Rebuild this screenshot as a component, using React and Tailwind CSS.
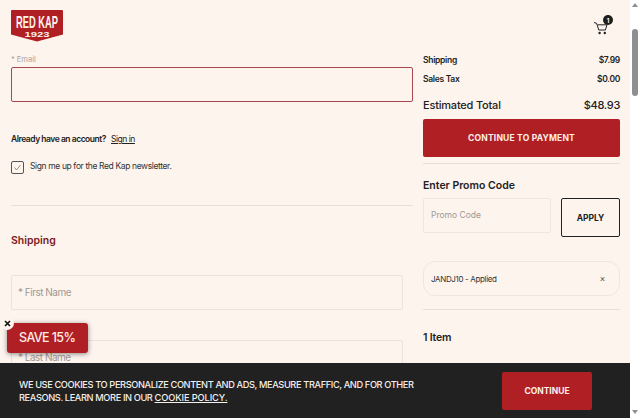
const font = { fontFamily: "Inter, 'Liberation Sans', sans-serif" };

function Logo() {
  return (
    <svg width="52" height="32" viewBox="0 0 52 32" className="block">
      <path d="M0 1a1 1 0 0 1 1-1h50a1 1 0 0 1 1 1v23.5L26 31.5 0 24.5z" fill="#b01f24" />
      <text x="26" y="17.5" textAnchor="middle" textLength="42" lengthAdjust="spacingAndGlyphs" fill="#fdf4ee" fontFamily="Liberation Sans, sans-serif" fontWeight="700" fontSize="17">RED KAP</text>
      <text x="26" y="26.5" textAnchor="middle" textLength="25" lengthAdjust="spacingAndGlyphs" fill="#fdf4ee" fontFamily="Liberation Sans, sans-serif" fontWeight="700" fontSize="7">1923</text>
    </svg>
  );
}

function Cart() {
  return (
    <div className="relative w-[22px] h-[22px]">
      <svg width="16" height="16" viewBox="0 0 16 16" fill="none" className="absolute left-[2px] top-[6px]">
        <path d="M1 2.5l2.6.8 2.2 6.7h6.6l1.6-5.2H4.6" stroke="#222" strokeWidth="1" strokeLinejoin="round" />
        <circle cx="6.6" cy="13" r="1.2" fill="#222" />
        <circle cx="11.8" cy="13" r="1.2" fill="#222" />
      </svg>
      <div className="absolute right-0 top-[1px] w-[10px] h-[10px] rounded-full bg-[#1e1e1e] text-white text-[6px] font-bold flex items-center justify-center">1</div>
    </div>
  );
}

function Row({ label, value }) {
  return (
    <div className="flex justify-between items-center h-[19px] text-[8.5px] tracking-[-0.3px] font-semibold text-[#222]">
      <span>{label}</span>
      <span>{value}</span>
    </div>
  );
}

export default function App() {
  return (
    <div style={font} className="relative h-[418px] w-[640px] overflow-hidden flex bg-white">
      <div className="w-[630px] bg-[#fdf4ee] shrink-0">
        <header className="flex justify-between px-[11px] h-[51px] pt-[10px]">
          <Logo />
          <div className="mr-[6px] mt-[4px]"><Cart /></div>
        </header>

        <div className="flex pl-[11px] pr-[10px] gap-[10px]">
          <main className="w-[402px] shrink-0">
            <div className="text-[7.5px] text-[#a9a29d] leading-[10px] pt-[4px]">* Email</div>
            <div className="mt-[2px] h-[35px] rounded-[2px] border border-[#a8474f] bg-[#fdf4ee]" />
            <p className="mt-[32px] text-[8.5px] tracking-[-0.47px] leading-[11px] font-semibold text-[#222]">
              Already have an account?<span className="ml-[5px] font-normal underline">Sign in</span>
            </p>
            <label className="mt-[16px] flex items-center gap-[6px] text-[8.5px] tracking-[-0.38px] text-[#333]">
              <span className="w-[13px] h-[13px] rounded-[2px] border border-[#555] flex items-center justify-center">
                <svg width="9" height="9" viewBox="0 0 9 9" fill="none"><path d="M1.5 4.5l2 2.5L7.5 2" stroke="#777" strokeWidth="0.8" /></svg>
              </span>
              <span className="-mt-[2px]">Sign me up for the Red Kap newsletter.</span>
            </label>
            <hr className="mt-[31px] border-0 border-t border-[#e8dfd9]" />
            <h2 className="mt-[28px] text-[10.5px] leading-[14px] font-semibold text-[#7d1a20]">Shipping</h2>
            <div className="mt-[27px] w-[392px] h-[35px] border border-[#ece3dc] rounded-[2px] flex items-center px-[6px] text-[10px] tracking-[-0.5px] text-[#a09993]">* First Name</div>
            <div className="mt-[30px] w-[392px] h-[35px] border border-[#ece3dc] rounded-[2px] flex items-center px-[6px] text-[10px] tracking-[-0.5px] text-[#a09993]">* Last Name</div>
          </main>

          <aside className="w-[197px] shrink-0">
            <Row label="Shipping" value="$7.99" />
            <Row label="Sales Tax" value="$0.00" />
            <div className="flex justify-between items-center mt-[6px] h-[20px] text-[#222] font-medium">
              <span className="text-[11px] tracking-[-0.2px]">Estimated Total</span>
              <span className="text-[11px] tracking-[-0.3px]">$48.93</span>
            </div>
            <button className="mt-[4px] w-full h-[38px] rounded-[2px] bg-[#b01f24] text-[#fdeee6] text-[8.5px] font-bold tracking-[0.2px]">CONTINUE TO PAYMENT</button>
            <hr className="mt-[6px] border-0 border-t border-[#e8dfd9]" />
            <h3 className="mt-[15px] text-[10.5px] leading-[13px] font-semibold text-[#222]">Enter Promo Code</h3>
            <div className="mt-[6px] flex justify-between items-start">
              <div className="w-[128px] h-[35px] border border-[#efe6df] rounded-[2px] flex items-center px-[7px] text-[8.5px] text-[#a09993]">Promo Code</div>
              <button className="w-[59px] h-[39px] border border-[#222] rounded-[2px] pt-[1px] text-[8.5px] font-bold text-[#222]">APPLY</button>
            </div>
            <div className="mt-[24px] h-[35px] border border-[#efe6df] rounded-[12px] flex items-center justify-between px-[7px] text-[8px] tracking-[-0.35px] text-[#333]">
              <span>JANDJ10 - Applied</span>
              <span className="mr-[7px] text-[9px] text-[#555]">×</span>
            </div>
            <hr className="mt-[13px] border-0 border-t border-[#e8dfd9]" />
            <h3 className="mt-[20px] text-[10.5px] tracking-[-0.2px] font-semibold text-[#222]">1 Item</h3>
          </aside>
        </div>
      </div>

      {/* scrollbar */}
      <div className="w-[10px] bg-white flex flex-col items-center justify-between py-[3px]">
        <div className="flex flex-col items-center">
          <span className="w-0 h-0 border-x-[3px] border-x-transparent border-b-[4px] border-b-[#8f8f8f]" />
          <div className="mt-[22px] w-[6px] h-[67px] rounded-[3px] bg-[#8f8f8f]" />
        </div>
        <span className="mb-[1px] w-0 h-0 border-x-[3px] border-x-transparent border-t-[4px] border-t-[#8f8f8f]" />
      </div>

      {/* Save popup */}
      <div className="absolute left-[7px] top-[323px] w-[81px] h-[30px] rounded-[3px] bg-[#b01f24] text-[#fdeee6] text-[12.5px] tracking-[-0.6px] font-medium flex items-center pl-[12px] shadow-[0_1px_5px_rgba(0,0,0,0.45)]">SAVE 15%</div>
      <div className="absolute left-0 top-[316px] w-[14px] h-[14px] rounded-full bg-[#fdf4ee] flex items-center justify-center">
        <svg width="7" height="7" viewBox="0 0 7 7"><path d="M1 1l5 5M6 1L1 6" stroke="#111" strokeWidth="1.6" /></svg>
      </div>

      {/* Cookie banner */}
      <div className="absolute left-0 bottom-0 w-[630px] h-[55px] bg-[#212121] flex items-center justify-between pl-[19px] pr-[38px]">
        <p className="pt-[2px] text-[9.25px] tracking-[-0.39px] font-medium leading-[12.5px] text-[#f3efec] w-[420px]">
          WE USE COOKIES TO PERSONALIZE CONTENT AND ADS, MEASURE TRAFFIC, AND FOR OTHER REASONS. LEARN MORE IN OUR <span className="underline tracking-[-0.1px]">COOKIE POLICY.</span>
        </p>
        <button className="w-[90px] h-[38px] rounded-[2px] pt-[1px] bg-[#b01f24] text-[#fdeee6] text-[8.5px] font-bold">CONTINUE</button>
      </div>
    </div>
  );
}
